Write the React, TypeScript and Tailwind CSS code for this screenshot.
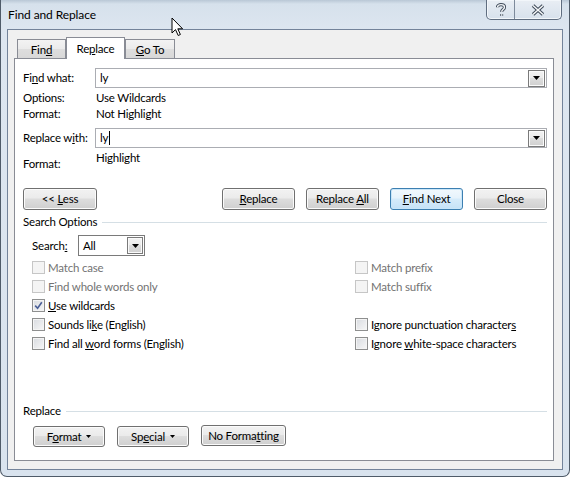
import type { ReactNode } from "react"

const btnBg = "bg-[linear-gradient(#f2f2f2,#ebebeb_45%,#dddddd_50%,#cfcfcf)]"

function DropArrow() {
  return (
    <svg width="7" height="4" viewBox="0 0 7 4">
      <polygon points="0,0 7,0 3.5,4" fill="#000" />
    </svg>
  )
}

function DropButton({ className = "" }: { className?: string }) {
  return (
    <div
      className={`flex items-center justify-center border border-[#7a7a7a] ${btnBg} shadow-[inset_0_0_0_1px_#fafafa] ${className}`}
    >
      <DropArrow />
    </div>
  )
}

function Combo({ value, caret }: { value: string; caret?: boolean }) {
  return (
    <div className="flex h-[20px] flex-1 items-center border border-[#abadb3] bg-white pl-[4px] pr-px">
      <span className="flex flex-1 items-center">
        {value}
        {caret && <span className="ml-px inline-block h-[14px] w-px bg-black" />}
      </span>
      <DropButton className="h-[17px] w-[17px]" />
    </div>
  )
}

function Button({
  children,
  className = "w-[73px]",
  focused,
}: {
  children: ReactNode
  className?: string
  focused?: boolean
}) {
  const look = focused
    ? "border-[#3c7fb1] bg-[linear-gradient(#f1f8fd,#e6f3fc_45%,#d5ebfa_50%,#c5e2f7)] shadow-[inset_0_0_0_1px_#c9e6f9]"
    : `border-[#707070] ${btnBg} shadow-[inset_0_0_0_1px_#fbfbfb]`
  return (
    <div className={`flex items-center justify-center rounded-[3px] border ${look} ${className}`}>
      <span>{children}</span>
    </div>
  )
}

function Check({
  label,
  checked,
  disabled,
}: {
  label: ReactNode
  checked?: boolean
  disabled?: boolean
}) {
  return (
    <div className="flex h-[19px] items-center gap-[3px]">
      <div
        className={`flex h-[13px] w-[13px] items-center justify-center border ${
          disabled
            ? "border-[#c6c6c6] bg-[#f4f4f4]"
            : "border-[#8e8f8f] bg-[linear-gradient(135deg,#d8dbe0,#f7f7f7)] shadow-[inset_0_0_0_1px_#f4f4f4]"
        }`}
      >
        {checked && (
          <svg width="9" height="9" viewBox="0 0 9 9">
            <path d="M1.2 4.6 L3.6 7.2 L7.8 1.2" fill="none" stroke="#4a5f97" strokeWidth="1.6" />
          </svg>
        )}
      </div>
      <span className={disabled ? "text-[#737373]" : "text-black"}>{label}</span>
    </div>
  )
}

function Heading({ children }: { children: ReactNode }) {
  return (
    <div className="flex h-[16px] items-center gap-[5px]">
      <span>{children}</span>
      <div className="h-px flex-1 bg-[#d5dfe5]" />
    </div>
  )
}

function Tab({ children, active, className = "" }: { children: ReactNode; active?: boolean; className?: string }) {
  return active ? (
    <div
      className={`relative z-10 -mb-px flex h-[22px] items-center justify-center border border-b-0 border-[#898c95] bg-white pt-px ${className}`}
    >
      {children}
    </div>
  ) : (
    <div
      className={`flex h-[19px] items-center justify-center border border-b-0 border-[#898c95] bg-[linear-gradient(#f3f3f3,#ebebeb_50%,#dedede_50%,#d8d8d8)] pt-[2px] ${className}`}
    >
      {children}
    </div>
  )
}

function CaptionButtons() {
  return (
    <div className="mr-px flex h-[20px] overflow-hidden rounded-b-[5px] border border-t-0 border-[#5f6d80] bg-[linear-gradient(#e9eef4,#d7e1ec)] shadow-[inset_0_0_0_1px_#f2f6fa]">
      <div className="flex w-[28px] items-center justify-center border-r border-[#7d8a9b]">
        <svg width="10" height="14" viewBox="0 0 10 14">
          <path
            d="M1.5 4.2 C1.5 0.8 8.5 0.8 8.5 4.2 C8.5 6.4 5.6 6.6 5.6 8.8 M5.6 11.2 L5.6 12.8"
            fill="none"
            stroke="#3e4a59"
            strokeWidth="3.2"
          />
          <path
            d="M1.5 4.2 C1.5 0.8 8.5 0.8 8.5 4.2 C8.5 6.4 5.6 6.6 5.6 8.8 M5.6 11.2 L5.6 12.8"
            fill="none"
            stroke="#f4f6f8"
            strokeWidth="1.4"
          />
        </svg>
      </div>
      <div className="flex w-[46px] items-center justify-center">
        <svg width="14" height="12" viewBox="0 0 14 12">
          <path d="M2 1.5 L12 10.5 M12 1.5 L2 10.5" stroke="#3e4a59" strokeWidth="3.6" />
          <path d="M2 1.5 L12 10.5 M12 1.5 L2 10.5" stroke="#f4f6f8" strokeWidth="1.6" />
        </svg>
      </div>
    </div>
  )
}

function Cursor() {
  return (
    <svg className="absolute left-[171px] top-[17px] z-20" width="13" height="20" viewBox="0 0 13 20">
      <path
        d="M1 1 L1 16 L4.5 12.6 L7.2 18.5 L9.4 17.5 L6.8 11.8 L11.6 11.8 Z"
        fill="#fff"
        stroke="#000"
        strokeWidth="1"
        strokeLinejoin="round"
      />
    </svg>
  )
}

export default function App() {
  return (
    <div className="relative h-[477px] w-[570px] overflow-hidden bg-white font-['Lato','Noto_Sans',sans-serif] text-[11.5px] leading-[16px] tracking-[-0.2px] text-black">
      <Cursor />
      <div className="flex h-[477px] w-[570px] flex-col rounded-b-[7px] border-x border-b border-[#4f5b69] bg-[linear-gradient(#b9c7d6,#d6e1ec_4px,#dde6f0_30px,#d9e3ee)] px-[6px] pb-[6px]">
        {/* title bar */}
        <div className="flex h-[29px] items-start justify-between">
          <div className="flex h-[29px] items-center pl-px text-[12px] tracking-[-0.1px] text-black">Find and Replace</div>
          <CaptionButtons />
        </div>

        {/* client area */}
        <div className="flex flex-1 flex-col border border-[#73839a] bg-[#f0f0f0] pb-[8px] pl-[6px] pr-[8px] pt-[7px]">
          <div className="flex items-end pl-[3px]">
            <Tab className="w-[49px]">
              Fin<span className="underline">d</span>
            </Tab>
            <Tab active className="w-[59px]">
              Re<span className="underline">p</span>lace
            </Tab>
            <Tab className="w-[50px]">
              <span className="underline">G</span>o To
            </Tab>
          </div>

          <div className="flex flex-1 flex-col border border-[#898c95] bg-white pb-[13px] pl-[8px] pr-[6px] pt-[9px]">
            <div className="flex h-[20px] items-center">
              <span className="w-[72px]">
                Fi<span className="underline">n</span>d what:
              </span>
              <Combo value="ly" />
            </div>
            <div className="mt-[2px] flex h-[16px] items-center">
              <span className="w-[73px]">Options:</span>
              <span>Use Wildcards</span>
            </div>
            <div className="flex h-[16px] items-center">
              <span className="w-[73px]">Format:</span>
              <span>Not Highlight</span>
            </div>
            <div className="mt-[6px] flex h-[20px] items-center">
              <span className="w-[72px]">
                Replace w<span className="underline">i</span>th:
              </span>
              <Combo value="ly" caret />
            </div>
            <div className="mt-[2px] flex h-[22px]">
              <span className="w-[73px] self-end">Format:</span>
              <span className="self-start">Highlight</span>
            </div>

            <div className="mt-[16px] flex h-[22px] gap-[11px]">
              <Button className="w-[74px]">
                &lt;&lt; <span className="underline">L</span>ess
              </Button>
              <div className="flex-1" />
              <Button>
                <span className="underline">R</span>eplace
              </Button>
              <Button>
                Replace <span className="underline">A</span>ll
              </Button>
              <Button focused>
                <span className="underline">F</span>ind Next
              </Button>
              <Button>Close</Button>
            </div>

            <div className="mt-[4px]">
              <Heading>Search Options</Heading>
            </div>

            <div className="mt-[5px] flex h-[21px] items-center pl-[9px]">
              <span className="w-[46px]">
                Search<span className="underline">:</span>
              </span>
              <div className="flex h-[21px] w-[67px] items-center border border-[#7a7a7a] bg-white pl-[4px] pr-px">
                <span className="flex-1">All</span>
                <DropButton className="h-[17px] w-[16px]" />
              </div>
            </div>

            <div className="mt-[2px] grid grid-cols-[323px_1fr] pl-[9px]">
              <Check label="Match case" disabled />
              <Check label="Match prefix" disabled />
              <Check label="Find whole words only" disabled />
              <Check label="Match suffix" disabled />
              <Check
                checked
                label={
                  <>
                    <span className="underline">U</span>se wildcards
                  </>
                }
              />
              <div />
              <Check
                label={
                  <>
                    Sounds li<span className="underline">k</span>e (English)
                  </>
                }
              />
              <Check
                label={
                  <>
                    Ignore punctuation character<span className="underline">s</span>
                  </>
                }
              />
              <Check
                label={
                  <>
                    Find all <span className="underline">w</span>ord forms (English)
                  </>
                }
              />
              <Check
                label={
                  <>
                    Ignore <span className="underline">w</span>hite-space characters
                  </>
                }
              />
            </div>

            <div className="flex-1" />

            <Heading>Replace</Heading>
            <div className="mt-[6px] flex items-start gap-[12px] pl-[10px]">
              <Button className="mt-px h-[21px] w-[72px]">
                <span className="flex items-center gap-[5px]">
                  <span>
                    F<span className="underline">o</span>rmat
                  </span>
                  <svg width="5" height="3" viewBox="0 0 5 3">
                    <polygon points="0,0 5,0 2.5,3" fill="#000" />
                  </svg>
                </span>
              </Button>
              <Button className="mt-px h-[21px] w-[72px]">
                <span className="flex items-center gap-[5px]">
                  <span>
                    Sp<span className="underline">e</span>cial
                  </span>
                  <svg width="5" height="3" viewBox="0 0 5 3">
                    <polygon points="0,0 5,0 2.5,3" fill="#000" />
                  </svg>
                </span>
              </Button>
              <Button className="h-[21px] w-[85px]">
                No Forma<span className="underline">t</span>ting
              </Button>
            </div>
          </div>
        </div>
      </div>
    </div>
  )
}
